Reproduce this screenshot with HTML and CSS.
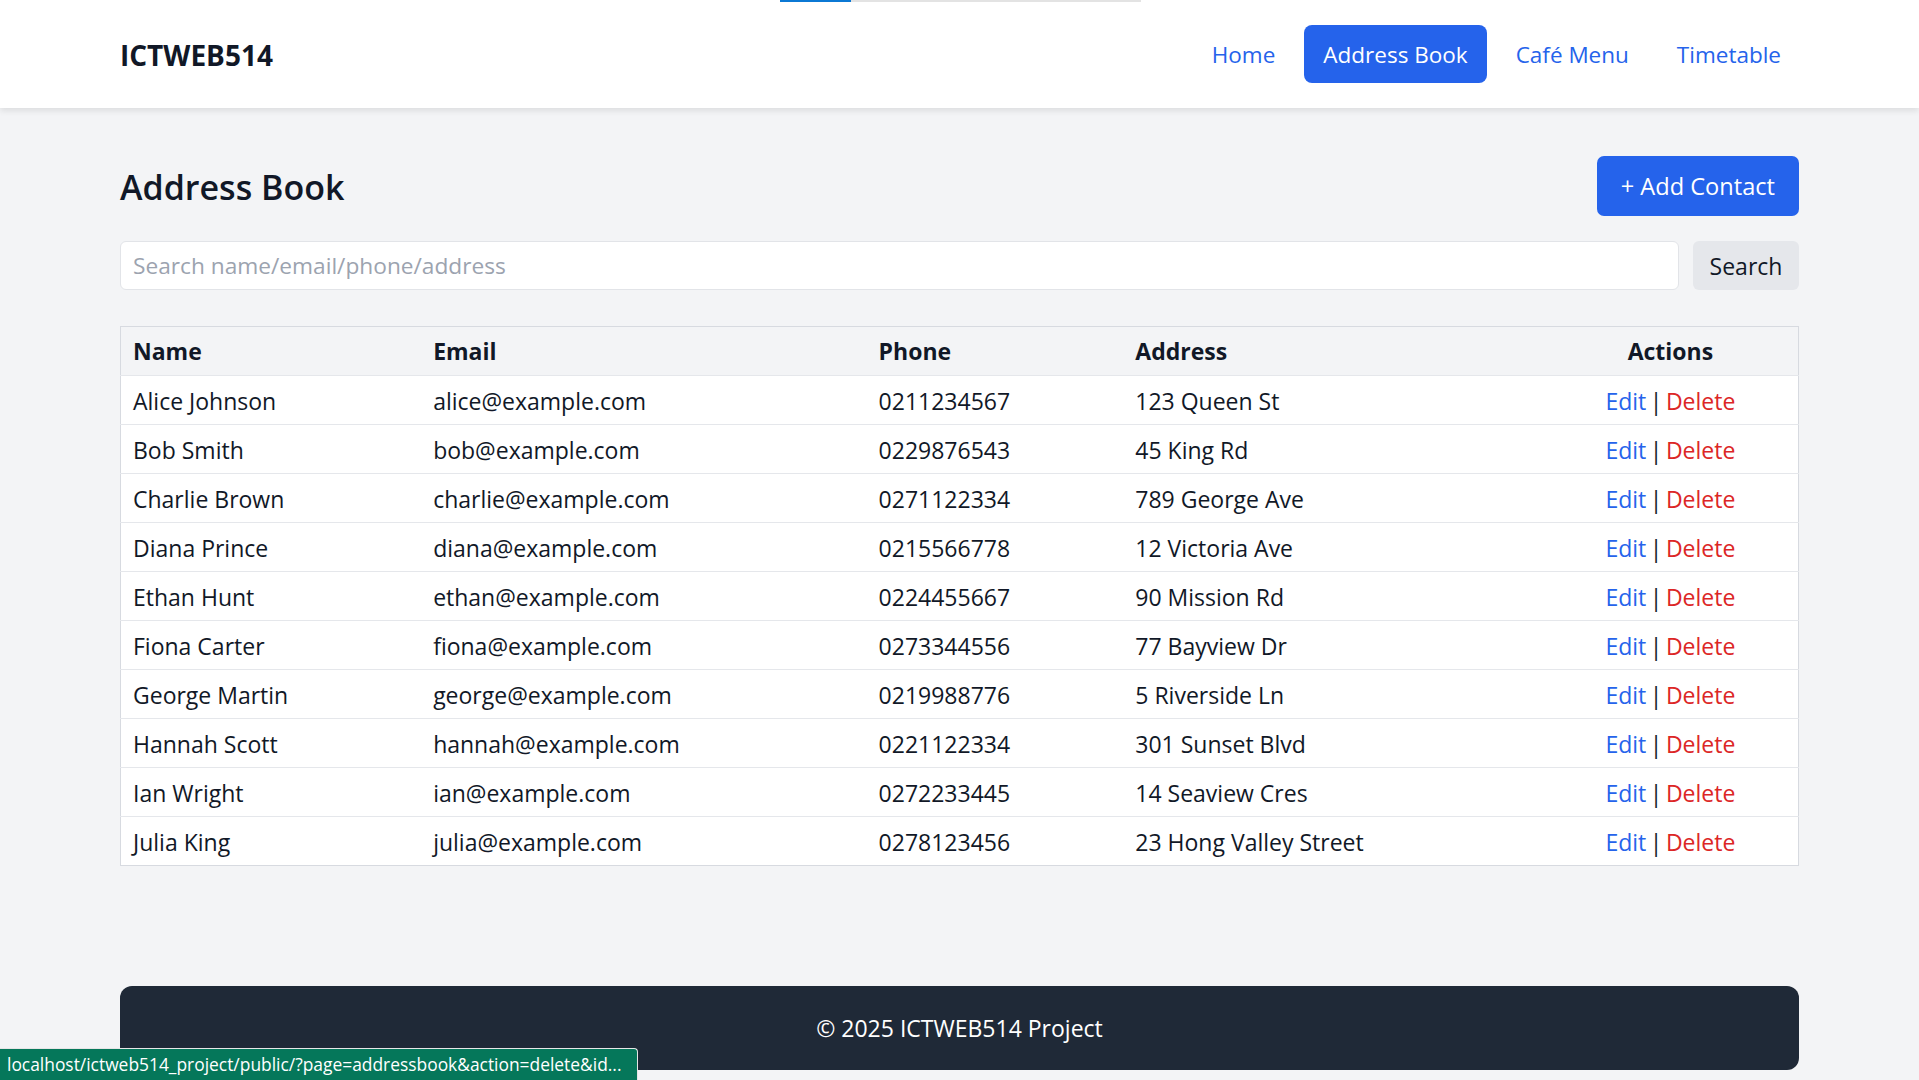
FILE: index.html
```html
<!DOCTYPE html>
<html lang="en">
<head>
<meta charset="utf-8">
<title>Address Book - ICTWEB514</title>
<link rel="stylesheet" href="styles.css">
</head>
<body>
<div class="loadbar"><span class="loadbar-fill"></span></div>
<header class="topbar">
  <div class="container topbar-inner">
    <div class="logo">ICTWEB514</div>
    <nav class="nav">
      <a class="nav-link" href="#">Home</a>
      <a class="nav-link active" href="#">Address Book</a>
      <a class="nav-link" href="#">Café Menu</a>
      <a class="nav-link" href="#">Timetable</a>
    </nav>
  </div>
</header>

<main class="container main">
  <div class="title-row">
    <h1 class="title">Address Book</h1>
    <a class="btn-primary" href="#">+ Add Contact</a>
  </div>

  <form class="search-form">
    <input class="search-input" type="text" placeholder="Search name/email/phone/address">
    <button class="search-btn" type="button">Search</button>
  </form>

  <table class="contacts">
    <colgroup>
      <col class="c-name"><col class="c-email"><col class="c-phone"><col class="c-addr"><col class="c-act">
    </colgroup>
    <thead>
      <tr><th>Name</th><th>Email</th><th>Phone</th><th>Address</th><th class="center">Actions</th></tr>
    </thead>
    <tbody>
      <tr><td>Alice Johnson</td><td>alice@example.com</td><td>0211234567</td><td>123 Queen St</td><td class="center actions"><a class="edit" href="#">Edit</a> | <a class="del" href="#">Delete</a></td></tr>
      <tr><td>Bob Smith</td><td>bob@example.com</td><td>0229876543</td><td>45 King Rd</td><td class="center actions"><a class="edit" href="#">Edit</a> | <a class="del" href="#">Delete</a></td></tr>
      <tr><td>Charlie Brown</td><td>charlie@example.com</td><td>0271122334</td><td>789 George Ave</td><td class="center actions"><a class="edit" href="#">Edit</a> | <a class="del" href="#">Delete</a></td></tr>
      <tr><td>Diana Prince</td><td>diana@example.com</td><td>0215566778</td><td>12 Victoria Ave</td><td class="center actions"><a class="edit" href="#">Edit</a> | <a class="del" href="#">Delete</a></td></tr>
      <tr><td>Ethan Hunt</td><td>ethan@example.com</td><td>0224455667</td><td>90 Mission Rd</td><td class="center actions"><a class="edit" href="#">Edit</a> | <a class="del" href="#">Delete</a></td></tr>
      <tr><td>Fiona Carter</td><td>fiona@example.com</td><td>0273344556</td><td>77 Bayview Dr</td><td class="center actions"><a class="edit" href="#">Edit</a> | <a class="del" href="#">Delete</a></td></tr>
      <tr><td>George Martin</td><td>george@example.com</td><td>0219988776</td><td>5 Riverside Ln</td><td class="center actions"><a class="edit" href="#">Edit</a> | <a class="del" href="#">Delete</a></td></tr>
      <tr><td>Hannah Scott</td><td>hannah@example.com</td><td>0221122334</td><td>301 Sunset Blvd</td><td class="center actions"><a class="edit" href="#">Edit</a> | <a class="del" href="#">Delete</a></td></tr>
      <tr><td>Ian Wright</td><td>ian@example.com</td><td>0272233445</td><td>14 Seaview Cres</td><td class="center actions"><a class="edit" href="#">Edit</a> | <a class="del" href="#">Delete</a></td></tr>
      <tr><td>Julia King</td><td>julia@example.com</td><td>0278123456</td><td>23 Hong Valley Street</td><td class="center actions"><a class="edit" href="#">Edit</a> | <a class="del" href="#">Delete</a></td></tr>
    </tbody>
  </table>
</main>

<footer class="container footer">© 2025 ICTWEB514 Project</footer>

<div class="statusbar">localhost/ictweb514_project/public/?page=addressbook&amp;action=delete&amp;id...</div>
</body>
</html>
```

FILE: styles.css
```css
* { box-sizing: border-box; }

html, body {
  margin: 0;
  padding: 0;
}

body {
  background: #f3f4f6;
  color: #111827;
  font-family: "Open Sans", "Noto Sans", "Liberation Sans", sans-serif;
  font-size: 23px;
}

.container {
  margin-left: 120px;
  margin-right: 120px;
}

/* browser loading indicator */
.loadbar {
  position: fixed;
  top: 0;
  left: 780px;
  width: 361px;
  height: 2px;
  background: #e3e3e3;
  z-index: 10;
}
.loadbar-fill {
  display: block;
  width: 71px;
  height: 2px;
  background: #0b78d4;
}

/* header */
.topbar {
  background: #ffffff;
  height: 108px;
  box-shadow: 0 3px 6px rgba(0, 0, 0, 0.09);
}
.topbar-inner {
  height: 108px;
  display: flex;
  align-items: center;
  justify-content: space-between;
}
.logo {
  font-size: 28px;
  font-weight: 700;
  color: #111827;
  padding-top: 1px;
}
.nav {
  display: flex;
  align-items: center;
  gap: 10px;
  margin-right: -1px;
}
.nav-link {
  display: block;
  height: 58px;
  line-height: 60px;
  padding: 0 19px;
  color: #2563eb;
  text-decoration: none;
  font-size: 22.5px;
  border-radius: 8px;
}
.nav-link.active {
  background: #2563eb;
  color: #ffffff;
}

/* main */
.main {
  padding-top: 48px;
}
.title-row {
  display: flex;
  align-items: center;
  justify-content: space-between;
  height: 60px;
}
.title {
  margin: 0;
  padding-top: 2px;
  font-size: 34px;
  font-weight: 600;
  color: #111827;
}
.btn-primary {
  display: block;
  height: 60px;
  line-height: 60px;
  padding: 0 24px;
  background: #2563eb;
  color: #ffffff;
  text-decoration: none;
  border-radius: 7px;
  font-size: 23.6px;
}

.search-form {
  margin-top: 25px;
  display: flex;
  gap: 14px;
  height: 49px;
}
.search-input {
  flex: 1;
  height: 49px;
  border: 1px solid #e2e4e8;
  border-radius: 6px;
  background: #ffffff;
  padding: 0 12px;
  font-family: inherit;
  font-size: 22.7px;
  color: #111827;
  outline: none;
}
.search-input::placeholder {
  color: #9ca3af;
}
.search-btn {
  width: 106px;
  height: 49px;
  border: none;
  border-radius: 6px;
  background: #e5e7eb;
  color: #111827;
  font-family: inherit;
  font-size: 23px;
  padding: 0;
}

/* table */
.contacts {
  margin-top: 36px;
  width: 100%;
  border-collapse: collapse;
  background: #ffffff;
  border: 1px solid #d7dae0;
}
.c-name { width: 301px; }
.c-email { width: 446px; }
.c-phone { width: 257px; }
.c-addr { width: 420px; }
.c-act { width: 256px; }

.contacts th,
.contacts td {
  padding: 0 12px;
  text-align: left;
  border-bottom: 1px solid #e5e7eb;
  white-space: nowrap;
}
.contacts thead tr {
  background: #f3f4f6;
}
.contacts th {
  height: 49px;
  font-weight: 700;
  color: #111827;
}
.contacts td {
  height: 40px;
  font-weight: 400;
  color: #111827;
  padding-top: 2px;
}
.contacts tbody tr {
  line-height: 46px;
}
.contacts tbody tr:last-child td {
  border-bottom: none;
}
.contacts .center {
  text-align: center;
}
.contacts .actions {
  word-spacing: -2.5px;
}
.edit {
  color: #2563eb;
  text-decoration: none;
}
.del {
  color: #dc2626;
  text-decoration: none;
}

/* footer */
.footer {
  margin-top: 120px;
  height: 84px;
  background: #1f2937;
  color: #ffffff;
  border-radius: 12px;
  display: flex;
  align-items: center;
  justify-content: center;
  font-size: 23px;
}

/* browser status bubble */
.statusbar {
  position: fixed;
  left: 0;
  bottom: 0;
  height: 32px;
  width: 638px;
  padding: 0 7px;
  line-height: 31px;
  background: #05775a;
  color: #ffffff;
  font-size: 17.4px;
  border-top-right-radius: 4px;
  border-top: 1px solid #e6e6e6;
  border-right: 1px solid #e6e6e6;
  white-space: nowrap;
  overflow: hidden;
}
```
